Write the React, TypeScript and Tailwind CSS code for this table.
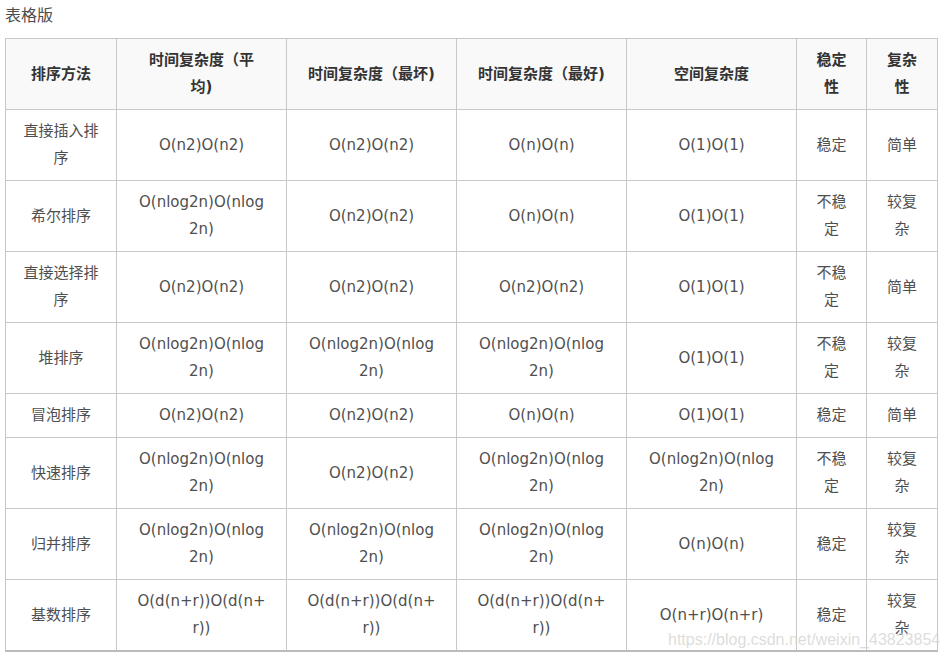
import React from 'react';

type Row = {
  name: string[];
  avg: string[];
  worst: string[];
  best: string[];
  space: string[];
  stable: string[];
  complex: string[];
};

const rows: Row[] = [
  { name: ['直接插入排', '序'], avg: ['O(n2)O(n2)'], worst: ['O(n2)O(n2)'], best: ['O(n)O(n)'], space: ['O(1)O(1)'], stable: ['稳定'], complex: ['简单'] },
  { name: ['希尔排序'], avg: ['O(nlog2n)O(nlog', '2n)'], worst: ['O(n2)O(n2)'], best: ['O(n)O(n)'], space: ['O(1)O(1)'], stable: ['不稳', '定'], complex: ['较复', '杂'] },
  { name: ['直接选择排', '序'], avg: ['O(n2)O(n2)'], worst: ['O(n2)O(n2)'], best: ['O(n2)O(n2)'], space: ['O(1)O(1)'], stable: ['不稳', '定'], complex: ['简单'] },
  { name: ['堆排序'], avg: ['O(nlog2n)O(nlog', '2n)'], worst: ['O(nlog2n)O(nlog', '2n)'], best: ['O(nlog2n)O(nlog', '2n)'], space: ['O(1)O(1)'], stable: ['不稳', '定'], complex: ['较复', '杂'] },
  { name: ['冒泡排序'], avg: ['O(n2)O(n2)'], worst: ['O(n2)O(n2)'], best: ['O(n)O(n)'], space: ['O(1)O(1)'], stable: ['稳定'], complex: ['简单'] },
  { name: ['快速排序'], avg: ['O(nlog2n)O(nlog', '2n)'], worst: ['O(n2)O(n2)'], best: ['O(nlog2n)O(nlog', '2n)'], space: ['O(nlog2n)O(nlog', '2n)'], stable: ['不稳', '定'], complex: ['较复', '杂'] },
  { name: ['归并排序'], avg: ['O(nlog2n)O(nlog', '2n)'], worst: ['O(nlog2n)O(nlog', '2n)'], best: ['O(nlog2n)O(nlog', '2n)'], space: ['O(n)O(n)'], stable: ['稳定'], complex: ['较复', '杂'] },
  { name: ['基数排序'], avg: ['O(d(n+r))O(d(n+', 'r))'], worst: ['O(d(n+r))O(d(n+', 'r))'], best: ['O(d(n+r))O(d(n+', 'r))'], space: ['O(n+r)O(n+r)'], stable: ['稳定'], complex: ['较复', '杂'] },
];

const headers: string[][] = [
  ['排序方法'],
  ['时间复杂度（平', '均)'],
  ['时间复杂度（最坏)'],
  ['时间复杂度（最好)'],
  ['空间复杂度'],
  ['稳定', '性'],
  ['复杂', '性'],
];

const Lines = ({ lines }: { lines: string[] }) => (
  <>
    {lines.map((l, i) => (
      <span key={i} className="block whitespace-nowrap">{l}</span>
    ))}
  </>
);

export default function App() {
  return (
    <div className="relative min-h-screen bg-white px-[5px] pt-[2px] text-[#4f4f4f] font-['DejaVu_Sans','Noto_Sans_CJK_SC',sans-serif]">
      <p className="text-[16px] leading-[24px] text-[#4d4d4d] font-['Noto_Sans_CJK_SC',sans-serif]">表格版</p>
      <table className="mt-[12px] w-[932px] table-fixed border-collapse border-b-2 border-b-[#bbbbbb] text-[15px] leading-[27px]">
        <colgroup>
          <col className="w-[111px]" />
          <col className="w-[170px]" />
          <col className="w-[170px]" />
          <col className="w-[170px]" />
          <col className="w-[170px]" />
          <col className="w-[70px]" />
          <col className="w-[71px]" />
        </colgroup>
        <thead>
          <tr className="bg-[#f9f9f9]">
            {headers.map((h, i) => (
              <th key={i} className="h-[71px] border border-[#c8c8c8] px-2 py-2 text-center font-bold text-[#333333]">
                <Lines lines={h} />
              </th>
            ))}
          </tr>
        </thead>
        <tbody>
          {rows.map((r, i) => (
            <tr key={i}>
              {[r.name, r.avg, r.worst, r.best, r.space, r.stable, r.complex].map((c, j) => (
                <td key={j} className="border border-[#c8c8c8] px-2 py-2 text-center align-middle">
                  <Lines lines={c} />
                </td>
              ))}
            </tr>
          ))}
        </tbody>
      </table>
      <div className="pointer-events-none absolute left-[668px] top-[629px] whitespace-nowrap font-['Liberation_Sans',Arial,sans-serif] text-[16px] leading-[22px] text-[#d4d4d4]/80">
        https://blog.csdn.net/weixin_43823854
      </div>
    </div>
  );
}
